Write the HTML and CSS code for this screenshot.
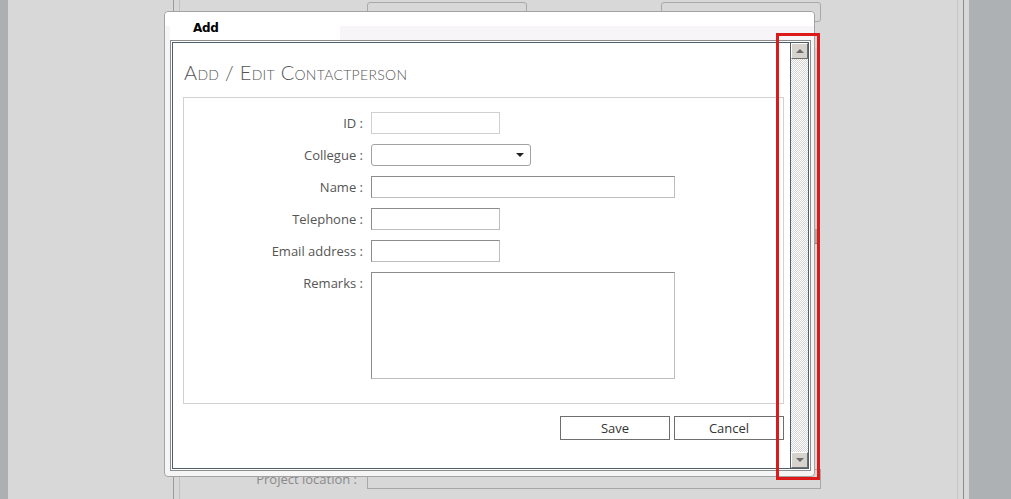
FILE: index.html
```html
<!DOCTYPE html>
<html lang="en">
<head>
<meta charset="UTF-8" />
<title>Add / Edit Contactperson</title>
<link rel="stylesheet" href="styles.css">
</head>
<body>

  <div class="page">
    <div class="edge-left"></div>
    <div class="panel">
      <div class="panel-inner">
        <div class="bg-row bg-row-top">
          <span class="bg-label"></span>
          <span class="bg-input bg-input-short"></span>
          <span class="bg-label bg-label-2"></span>
          <span class="bg-input bg-select"></span>
        </div>
        <div class="bg-middle">
          <div class="bg-scroll"><div class="bg-thumb"></div></div>
        </div>
        <div class="bg-row bg-row-bottom">
          <span class="bg-label">Project location :</span>
          <span class="bg-input bg-input-long"></span>
        </div>
      </div>
    </div>
    <div class="edge-right"></div>
  </div>

  <div class="dialog">
    <div class="dialog-title">
      <div class="tab">Add</div>
    </div>
    <div class="frame">
      <div class="frame-inner">
        <div class="content">
          <h1 class="heading">Add / Edit Contactperson</h1>

          <div class="fieldset">
            <div class="form-row">
              <label>ID :</label>
              <div class="field field-short field-readonly"></div>
            </div>
            <div class="form-row">
              <label>Collegue :</label>
              <div class="field field-select"><span class="caret"></span></div>
            </div>
            <div class="form-row">
              <label>Name :</label>
              <div class="field field-long"></div>
            </div>
            <div class="form-row">
              <label>Telephone :</label>
              <div class="field field-short"></div>
            </div>
            <div class="form-row">
              <label>Email address :</label>
              <div class="field field-short"></div>
            </div>
            <div class="form-row">
              <label>Remarks :</label>
              <div class="field field-long field-area"></div>
            </div>
          </div>

          <div class="buttons">
            <button class="btn">Save</button>
            <button class="btn">Cancel</button>
          </div>
        </div>

        <div class="scrollbar">
          <div class="scroll-btn"><span class="arrow-up"></span></div>
          <div class="scroll-track"></div>
          <div class="scroll-btn"><span class="arrow-down"></span></div>
        </div>
      </div>
    </div>
  </div>

  <!-- rode markering rond de scrollbar -->
  <div class="highlight"></div>

</body>
</html>
```

FILE: styles.css
```css
body {
  margin: 0;
  background: #d8d8d8;
  font-family: 'Open Sans', 'DejaVu Sans', sans-serif;
  font-size: 13px;
  color: #555;
  overflow: hidden;
}

/* achtergrondpagina */
.page {
  display: flex;
  height: 499px;
}
.edge-left {
  width: 8px;
  background: #acb0b3;
  margin-right: 165px;
}
.panel {
  width: 789px;
  border-left: 1px solid #9a9a9a;
  border-right: 1px solid #8c8c8c;
}
.panel-inner {
  height: 100%;
  margin: 0 5px;
  border-left: 1px solid #c2c2c2;
  border-right: 1px solid #c6c6c6;
  display: flex;
  flex-direction: column;
}
.edge-right {
  width: 42px;
  margin-left: 5px;
  background: #adb1b4;
}
.bg-row {
  display: flex;
  align-items: center;
}
.bg-row-top {
  margin-top: 2px;
  height: 20px;
}
.bg-label {
  width: 177px;
  text-align: right;
  color: #8a8a8a;
  margin-right: 10px;
}
.bg-label-2 {
  width: 120px;
  margin-left: 4px;
}
.bg-input {
  display: block;
  height: 18px;
  border: 1px solid #a8a8a8;
  background: #d8d8d8;
}
.bg-input-short {
  width: 158px;
  border-radius: 3px;
}
.bg-select {
  width: 158px;
  border-radius: 3px;
}
.bg-middle {
  flex: 1;
  display: flex;
}
.bg-scroll {
  margin-left: 633px;
  margin-top: 26px;
  width: 5px;
  height: 196px;
  border-left: 1px solid #a4a4a4;
  background: #cfcfcf;
  display: flex;
  flex-direction: column;
  justify-content: flex-end;
}
.bg-thumb {
  height: 14px;
  background: #a9a6a3;
  border-bottom: 1px solid #7d7d7d;
}
.bg-row-bottom {
  height: 20px;
  margin-bottom: 10px;
}
.bg-input-long {
  width: 452px;
}

/* dialoog */
.dialog {
  position: absolute;
  left: 164px;
  top: 11px;
  width: 641px;
  height: 459px;
  padding: 0 3px 5px 5px;
  border: 1px solid #a3a3a3;
  border-radius: 4px;
  background: #f5f5f5;
  display: flex;
  flex-direction: column;
}
.dialog-title {
  height: 28px;
  margin-left: -5px;
  margin-right: -3px;
  padding-left: 5px;
  background: linear-gradient(#fff 0, #fff 14px, #f7f5f8 14px);
  border-radius: 4px 4px 0 0;
  display: flex;
  align-items: flex-end;
}
.tab {
  width: 147px;
  height: 24px;
  padding-left: 23px;
  background: #fff;
  color: #000;
  font-weight: 700;
  font-size: 12px;
  line-height: 24px;
  font-family: 'DejaVu Sans', sans-serif;
  letter-spacing: -0.3px;
}
.frame {
  flex: 1;
  border: 1px solid #8d8d8d;
  padding: 1px;
  background: #fff;
  display: flex;
}
.frame-inner {
  flex: 1;
  border: 1px solid #4e5e69;
  display: flex;
}
.content {
  flex: 1;
  padding: 0 6px 0 10px;
}
.heading {
  margin: 16px 0 12px 1px;
  font-family: 'Lato', 'Open Sans', sans-serif;
  font-weight: 300;
  font-variant: small-caps;
  font-size: 20px;
  line-height: 26px;
  color: #555;
  letter-spacing: 0.3px;
}
.fieldset {
  border: 1px solid #d2d2d2;
  height: 291px;
  padding-top: 14px;
  display: flex;
  flex-direction: column;
  gap: 10px;
}
.form-row {
  display: flex;
  align-items: flex-start;
}
.form-row label {
  width: 179px;
  margin-right: 8px;
  text-align: right;
  line-height: 22px;
  white-space: nowrap;
}
.field {
  height: 20px;
  background: #fff;
  border: 1px solid #bdbdbd;
  border-top-color: #8c8c8c;
  border-left-color: #8c8c8c;
}
.field-short {
  width: 127px;
}
.field-readonly {
  border-color: #d0d0d0;
}
.field-long {
  width: 302px;
}
.field-area {
  height: 105px;
}
.field-select {
  width: 158px;
  border: 1px solid #a2a2a2;
  border-radius: 3px;
  display: flex;
  justify-content: flex-end;
  align-items: center;
}
.caret {
  width: 0;
  height: 0;
  margin-right: 6px;
  border-left: 4px solid transparent;
  border-right: 4px solid transparent;
  border-top: 4px solid #222;
}
.buttons {
  display: flex;
  justify-content: flex-end;
  gap: 4px;
  margin-top: 12px;
}
.btn {
  width: 110px;
  height: 24px;
  border: 1px solid #6e6e6e;
  background: #fff;
  font-family: 'Open Sans', 'DejaVu Sans', sans-serif;
  font-size: 13px;
  color: #333;
  padding: 0;
}

/* scrollbar in de dialoog */
.scrollbar {
  width: 17px;
  border-left: 1px solid #4e5e69;
  display: flex;
  flex-direction: column;
}
.scroll-btn {
  height: 14px;
  background: #d6d3ce;
  border: 1px solid #fff;
  border-right-color: #6f6f6f;
  border-bottom-color: #6f6f6f;
  display: flex;
  justify-content: center;
  align-items: center;
}
.scroll-track {
  flex: 1;
  background: repeating-conic-gradient(#d4d4d4 0 25%, #fff 0 50%) 0 0 / 2px 2px;
}
.arrow-up,
.arrow-down {
  width: 0;
  height: 0;
  border-left: 4px solid transparent;
  border-right: 4px solid transparent;
}
.arrow-up {
  border-bottom: 4px solid #6a6a6a;
}
.arrow-down {
  border-top: 4px solid #6a6a6a;
}

/* markering */
.highlight {
  position: absolute;
  left: 776px;
  top: 33px;
  width: 38px;
  height: 441px;
  border: 3px solid #dd1a1a;
}
```
